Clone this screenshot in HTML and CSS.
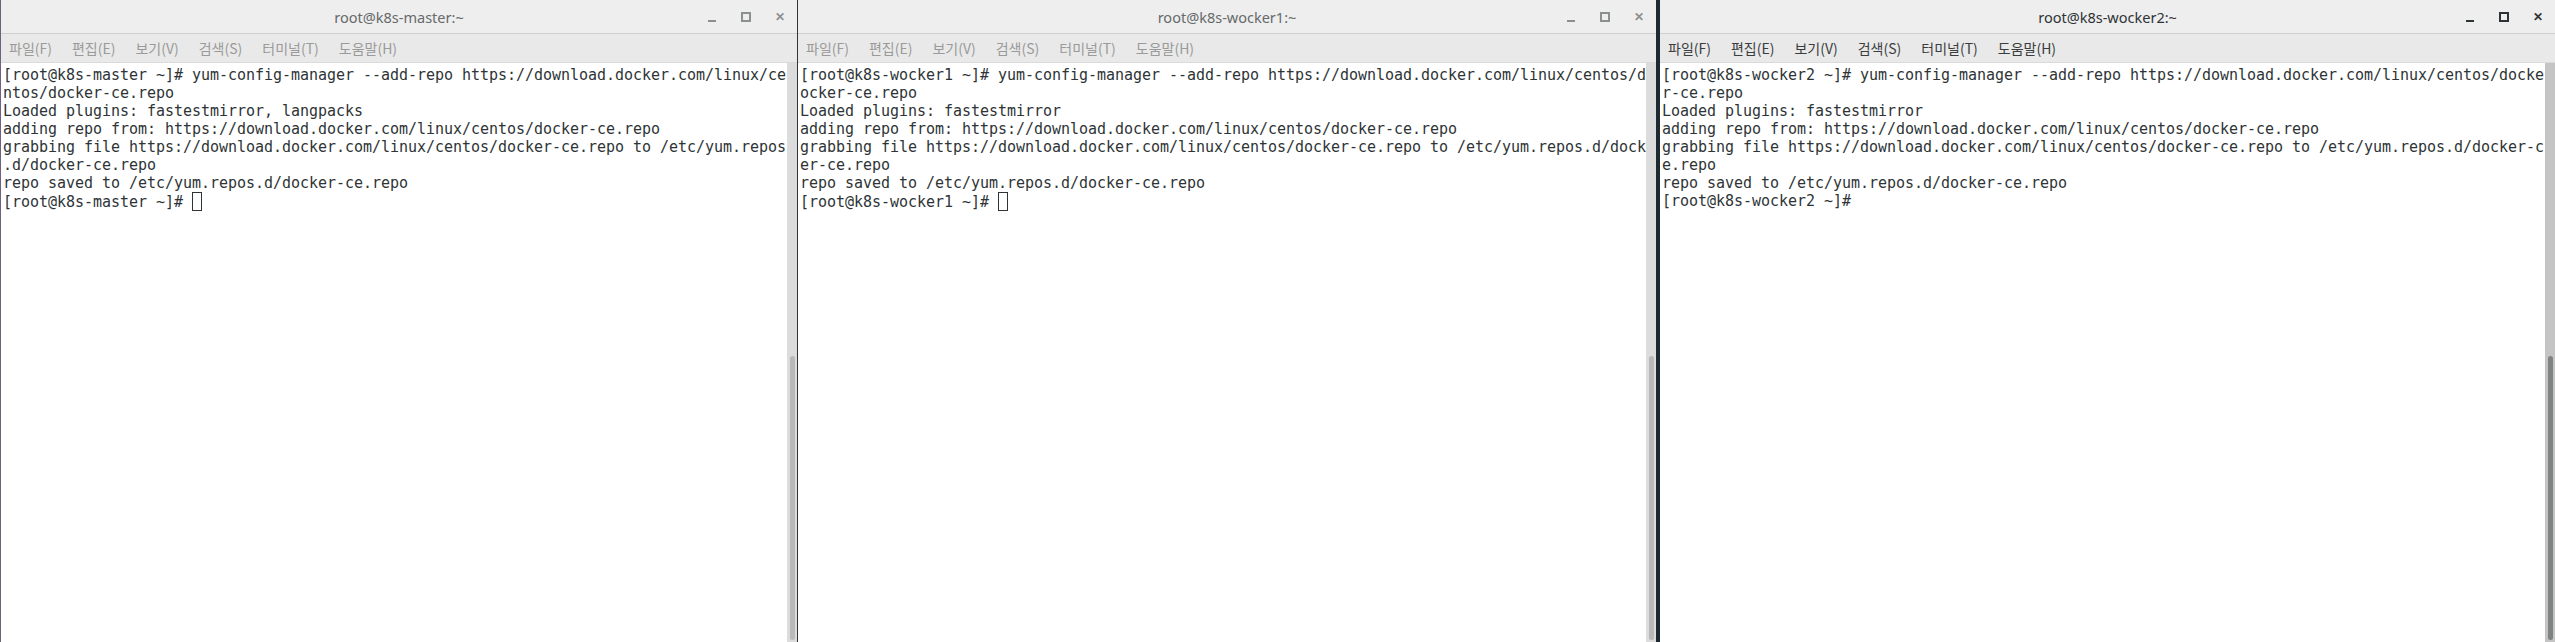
FILE: index.html
```html
<!DOCTYPE html>
<html>
<head>
  <link rel="stylesheet" href="styles.css">
</head>
<body>
  <div class="desktop">
    <div class="window win-master">
      <div class="titlebar">
        <span></span>
        <span class="title">root@k8s-master:~</span>
        <div class="controls">
          <span class="ctl ctl-min"></span>
          <span class="ctl ctl-max"></span>
          <span class="ctl ctl-close">&#x2715;</span>
        </div>
      </div>
      <div class="menubar">
        <span>파일(F)</span><span>편집(E)</span><span>보기(V)</span><span>검색(S)</span><span>터미널(T)</span><span>도움말(H)</span>
      </div>
      <div class="term-area">
        <div class="term">
          <div class="line">[root@k8s-master ~]# yum-config-manager --add-repo https://download.docker.com/linux/ce</div>
          <div class="line">ntos/docker-ce.repo</div>
          <div class="line">Loaded plugins: fastestmirror, langpacks</div>
          <div class="line">adding repo from: https://download.docker.com/linux/centos/docker-ce.repo</div>
          <div class="line">grabbing file https://download.docker.com/linux/centos/docker-ce.repo to /etc/yum.repos</div>
          <div class="line">.d/docker-ce.repo</div>
          <div class="line">repo saved to /etc/yum.repos.d/docker-ce.repo</div>
          <div class="line">[root@k8s-master ~]# <span class="cursor"></span></div>
        </div>
        <div class="scrollbar"><div class="thumb"></div></div>
      </div>
    </div>

    <div class="window win-wocker1">
      <div class="titlebar">
        <span></span>
        <span class="title">root@k8s-wocker1:~</span>
        <div class="controls">
          <span class="ctl ctl-min"></span>
          <span class="ctl ctl-max"></span>
          <span class="ctl ctl-close">&#x2715;</span>
        </div>
      </div>
      <div class="menubar">
        <span>파일(F)</span><span>편집(E)</span><span>보기(V)</span><span>검색(S)</span><span>터미널(T)</span><span>도움말(H)</span>
      </div>
      <div class="term-area">
        <div class="term">
          <div class="line">[root@k8s-wocker1 ~]# yum-config-manager --add-repo https://download.docker.com/linux/centos/d</div>
          <div class="line">ocker-ce.repo</div>
          <div class="line">Loaded plugins: fastestmirror</div>
          <div class="line">adding repo from: https://download.docker.com/linux/centos/docker-ce.repo</div>
          <div class="line">grabbing file https://download.docker.com/linux/centos/docker-ce.repo to /etc/yum.repos.d/dock</div>
          <div class="line">er-ce.repo</div>
          <div class="line">repo saved to /etc/yum.repos.d/docker-ce.repo</div>
          <div class="line">[root@k8s-wocker1 ~]# <span class="cursor"></span></div>
        </div>
        <div class="scrollbar"><div class="thumb"></div></div>
      </div>
    </div>

    <div class="window win-wocker2 focused">
      <div class="titlebar">
        <span></span>
        <span class="title">root@k8s-wocker2:~</span>
        <div class="controls">
          <span class="ctl ctl-min"></span>
          <span class="ctl ctl-max"></span>
          <span class="ctl ctl-close">&#x2715;</span>
        </div>
      </div>
      <div class="menubar">
        <span>파일(F)</span><span>편집(E)</span><span>보기(V)</span><span>검색(S)</span><span>터미널(T)</span><span>도움말(H)</span>
      </div>
      <div class="term-area">
        <div class="term">
          <div class="line">[root@k8s-wocker2 ~]# yum-config-manager --add-repo https://download.docker.com/linux/centos/docke</div>
          <div class="line">r-ce.repo</div>
          <div class="line">Loaded plugins: fastestmirror</div>
          <div class="line">adding repo from: https://download.docker.com/linux/centos/docker-ce.repo</div>
          <div class="line">grabbing file https://download.docker.com/linux/centos/docker-ce.repo to /etc/yum.repos.d/docker-c</div>
          <div class="line">e.repo</div>
          <div class="line">repo saved to /etc/yum.repos.d/docker-ce.repo</div>
          <div class="line">[root@k8s-wocker2 ~]#</div>
        </div>
        <div class="scrollbar"><div class="thumb"></div></div>
      </div>
    </div>
  </div>
</body>
</html>
```

FILE: styles.css
```css
body {
  margin: 0;
  background: #2b2b2b;
  font-family: 'Noto Sans', 'Noto Sans CJK KR', sans-serif;
}
.desktop {
  display: flex;
  width: 2555px;
  height: 642px;
  overflow: hidden;
}
.window {
  display: flex;
  flex-direction: column;
  background: #ffffff;
  height: 642px;
  box-sizing: border-box;
}
.win-master {
  width: 797px;
  border-left: 1px solid #6f5f80;
}
.win-wocker1 {
  width: 863px;
  border-left: 1px solid #2f3437;
  border-right: 4px solid #1e2a30;
}
.win-wocker2 {
  flex: 1;
}
.titlebar {
  display: grid;
  grid-template-columns: 1fr auto 1fr;
  align-items: center;
  height: 33px;
  background: #eeeeee;
  border-bottom: 1px solid #cfcfcf;
  flex-shrink: 0;
}
.title {
  font-size: 14.5px;
  color: #666a6b;
}
.focused .title {
  color: #2e3436;
}
.controls {
  justify-self: end;
  display: flex;
  gap: 10px;
  padding-right: 5px;
}
.ctl {
  width: 24px;
  height: 24px;
  display: flex;
  align-items: center;
  justify-content: center;
  color: #8c8f90;
  font-size: 12px;
}
.focused .ctl {
  color: #2e3436;
}
.ctl-min::after {
  content: "";
  width: 8px;
  height: 2px;
  background: currentColor;
  margin-top: 8px;
}
.ctl-max::after {
  content: "";
  width: 6px;
  height: 6px;
  border: 2px solid currentColor;
}
.ctl-close {
  font-weight: bold;
}
.menubar {
  display: flex;
  gap: 20px;
  align-items: center;
  height: 28px;
  padding-left: 8px;
  background: #e9e9e9;
  border-bottom: 1px solid #dadada;
  font-family: 'Noto Sans CJK KR', sans-serif;
  font-size: 14px;
  color: #9a9a9a;
  flex-shrink: 0;
}
.focused .menubar {
  color: #3a3d3e;
}
.term-area {
  flex: 1;
  display: flex;
  min-height: 0;
}
.term {
  flex: 1;
  min-width: 0;
  overflow: hidden;
  padding: 3px 1px 3px 2px;
  font-family: 'DejaVu Sans Mono', monospace;
  font-size: 15px;
  line-height: 18px;
  letter-spacing: -0.03px;
  color: #2e3436;
}
.line {
  white-space: pre;
  height: 18px;
}
.cursor {
  display: inline-block;
  width: 8px;
  height: 17px;
  border: 1px solid #2e3436;
  vertical-align: -4px;
}
.scrollbar {
  width: 10px;
  flex-shrink: 0;
  background: #dcdcdc;
  display: flex;
  flex-direction: column;
  justify-content: flex-end;
  padding: 0 2px 2px 3px;
  box-sizing: border-box;
}
.thumb {
  height: 284px;
  border-radius: 3px;
  background: #b9b9b9;
}
.focused .scrollbar {
  background: #c4c4c4;
}
.focused .thumb {
  background: #7f8384;
}
```
